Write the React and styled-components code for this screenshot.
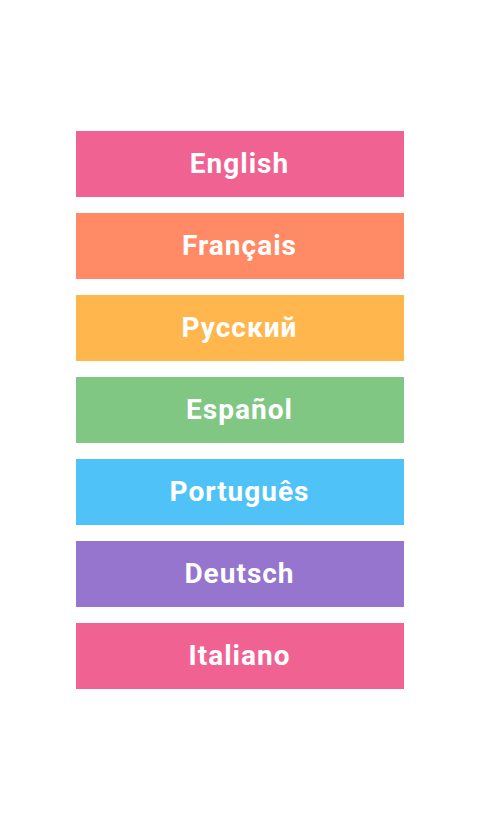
import React from "react";
import styled, { createGlobalStyle } from "styled-components";

const Global = createGlobalStyle`
  html, body { margin: 0; padding: 0; background: #ffffff; }
  body { font-family: Roboto, "Noto Sans", sans-serif; }
`;

const Page = styled.div`
  width: 480px;
  height: 820px;
  box-sizing: border-box;
  padding-top: 131px;
  display: flex;
  flex-direction: column;
  align-items: center;
`;

const List = styled.div`
  width: 328px;
  display: flex;
  flex-direction: column;
  gap: 16px;
`;

const LangButton = styled.button`
  height: 66px;
  width: 100%;
  border: none;
  border-radius: 0;
  padding: 0 1px 0 0;
  margin: 0;
  background: ${(p) => p.$bg};
  color: #ffffff;
  font-family: Roboto, "Noto Sans", sans-serif;
  font-weight: 700;
  font-size: 28px;
  letter-spacing: 1px;
  line-height: 1;
  display: flex;
  align-items: center;
  justify-content: center;
  cursor: pointer;
`;

const langs = [
  { label: "English", bg: "#F06292" },
  { label: "Français", bg: "#FF8A65" },
  { label: "Русский", bg: "#FFB74D" },
  { label: "Español", bg: "#81C784" },
  { label: "Português", bg: "#4FC3F7" },
  { label: "Deutsch", bg: "#9575CD" },
  { label: "Italiano", bg: "#F06292" },
];

export default function App() {
  return (
    <>
      <Global />
      <Page>
        <List>
          {langs.map((l) => (
            <LangButton key={l.label} $bg={l.bg}>
              {l.label}
            </LangButton>
          ))}
        </List>
      </Page>
    </>
  );
}
